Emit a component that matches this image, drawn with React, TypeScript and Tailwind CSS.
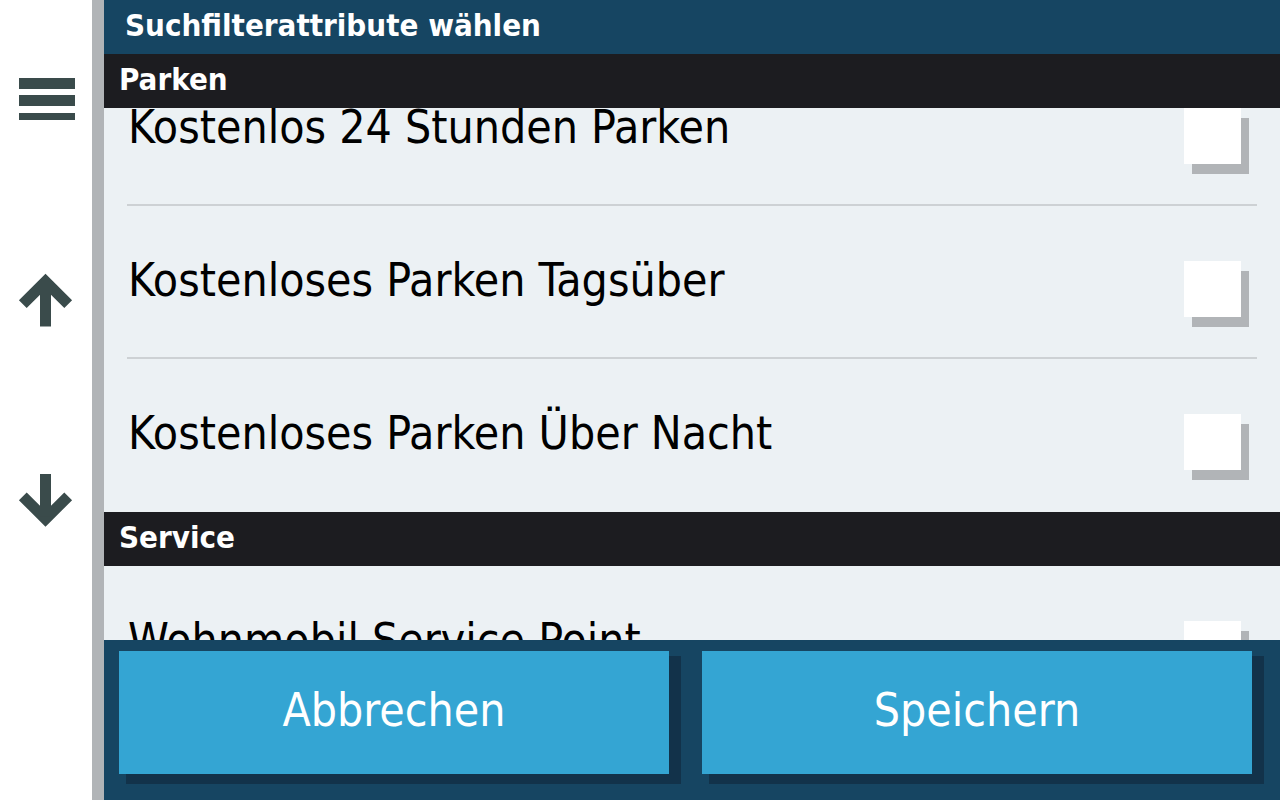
import React from "react";

const FONT = '"DejaVu Sans Condensed", "DejaVu Sans", "Liberation Sans", sans-serif';

function Hamburger() {
  return (
    <svg width="92" height="60" viewBox="0 0 92 60" className="block">
      <rect x="19" y="18" width="56" height="11" fill="#3a4b4b" />
      <rect x="19" y="35" width="56" height="11" fill="#3a4b4b" />
      <rect x="19" y="53" width="56" height="11" fill="#3a4b4b" />
    </svg>
  );
}

function ArrowUp() {
  return (
    <svg width="92" height="60" viewBox="0 0 92 60" className="block">
      <path d="M22.8 34.2 L45.5 11.5 L68.2 34.2" fill="none" stroke="#3a4b4b" strokeWidth="11" strokeLinejoin="miter" strokeLinecap="butt" />
      <path d="M45.5 14 V56.5" fill="none" stroke="#3a4b4b" strokeWidth="11" />
    </svg>
  );
}

function ArrowDown() {
  return (
    <svg width="92" height="60" viewBox="0 0 92 60" className="block">
      <path d="M22.8 26.3 L45.5 49 L68.2 26.3" fill="none" stroke="#3a4b4b" strokeWidth="11" strokeLinejoin="miter" strokeLinecap="butt" />
      <path d="M45.5 4 V46.5" fill="none" stroke="#3a4b4b" strokeWidth="11" />
    </svg>
  );
}

function Row({ label, last }: { label: string; last?: boolean }) {
  return (
    <div className="flex h-[153px] flex-col">
      <div className="flex flex-1 items-start justify-between pl-[24px] pr-[39px]">
        <div className="mt-[49px] text-[46px] leading-[51px] text-black whitespace-nowrap [font-stretch:condensed]">
          {label}
        </div>
        <div className="mt-[55px] h-[56px] w-[57px] bg-white shadow-[8px_10px_0_0_#b1b4b7]" />
      </div>
      {!last && <div className="mx-[23px] h-[2px] bg-[#cdd1d4]" />}
    </div>
  );
}

function SectionHeader({ title }: { title: string }) {
  return (
    <div className="relative z-10 flex h-[54px] items-center bg-[#1c1c20] pb-[3px] pl-[15px] text-[31px] font-bold text-white [font-stretch:condensed]">
      {title}
    </div>
  );
}

function Button({ label }: { label: string }) {
  return (
    <button className="flex h-[123px] w-[550px] items-center justify-center bg-[#34a5d3] pb-[4px] text-[46px] text-white shadow-[9.5px_7.5px_0_2.5px_#12324a] [font-stretch:condensed]">
      {label}
    </button>
  );
}

export default function App() {
  return (
    <div className="flex h-[800px] w-[1280px] overflow-hidden bg-white" style={{ fontFamily: FONT }}>
      <div className="flex w-[92px] flex-col bg-white">
        <div className="mt-[60px]">
          <Hamburger />
        </div>
        <div className="mt-[150px]">
          <ArrowUp />
        </div>
        <div className="mt-[140px]">
          <ArrowDown />
        </div>
      </div>
      <div className="w-[12px] bg-[#b1b4b7]" />
      <div className="flex flex-1 flex-col">
        <div className="flex h-[54px] items-center bg-[#164562] pb-[4px] pl-[21px] text-[31px] font-bold text-white [font-stretch:condensed]">
          Suchfilterattribute wählen
        </div>
        <div className="flex-1 overflow-hidden bg-[#ecf1f4]">
          <SectionHeader title="Parken" />
          <div className="-mt-[55px]">
            <Row label="Kostenlos 24 Stunden Parken" />
            <Row label="Kostenloses Parken Tagsüber" />
            <Row label="Kostenloses Parken Über Nacht" last />
          </div>
          <SectionHeader title="Service" />
          <Row label="Wohnmobil Service Point" />
        </div>
        <div className="flex h-[160px] gap-[33px] bg-[#164562] pl-[15px] pt-[11px]">
          <Button label="Abbrechen" />
          <Button label="Speichern" />
        </div>
      </div>
    </div>
  );
}
